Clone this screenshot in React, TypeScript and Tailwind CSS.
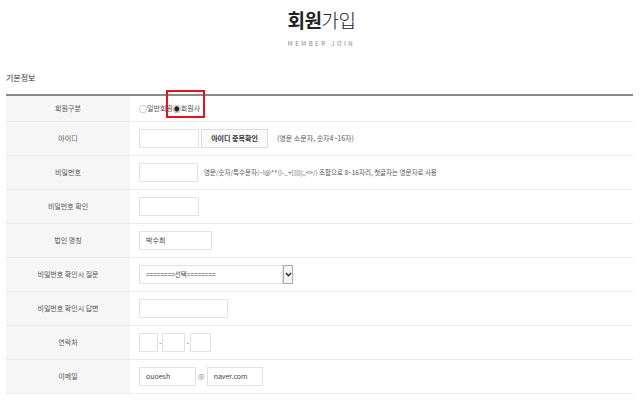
import React from "react";

const FONT = { fontFamily: '"Noto Sans CJK KR", "Noto Sans", sans-serif' };

function Row({ label, children, first }: { label: string; children: React.ReactNode; first?: boolean }) {
  return (
    <div className={`flex border-b border-[#ececec] ${first ? "h-[26px]" : "h-[34px]"}`}>
      <div className="w-[124px] shrink-0 bg-[#f6f6f6] flex items-center justify-center text-[7px] text-[#555]">
        {label}
      </div>
      <div className="flex-1 flex items-center pl-[9px] text-[7px] text-[#555]">{children}</div>
    </div>
  );
}

function Box({ w, value }: { w: string; value?: string }) {
  return (
    <div className={`${w} h-[19px] border border-[#e2e2e2] bg-white flex items-center px-[6px] text-[7px] text-[#444]`}>
      {value}
    </div>
  );
}

export default function App() {
  return (
    <div className="w-[643px] h-[403px] bg-white overflow-hidden antialiased" style={FONT}>
      <div className="flex flex-col items-center pt-[8px]">
        <h1 className="text-[19px] leading-[24px] text-[#222] tracking-[-0.5px]">
          <span className="font-bold">회원</span>
          <span className="font-light">가입</span>
        </h1>
        <p className="mt-[7px] text-[6px] tracking-[0.42em] text-[#888]">MEMBER JOIN</p>
      </div>

      <div className="px-[6px] pr-[10px]">
        <h2 className="mt-[24px] text-[8px] text-[#333]">기본정보</h2>

        <div className="mt-[10px] border-t-2 border-[#8a8a8a]">
          <Row label="회원구분" first>
            <div className="relative flex items-center">
              <span className="text-[8px] leading-none text-[#555]">○</span>
              <span>일반회원</span>
              <span className="text-[8px] leading-none text-[#222]">◉</span>
              <span>회원사</span>
              <div className="absolute left-[27px] top-[-13px] w-[39px] h-[28px] border-2 border-[#e3141c]" />
            </div>
          </Row>
          <Row label="아이디">
            <Box w="w-[60px]" />
            <div className="ml-[2px] w-[67px] h-[19px] border border-[#dcdcdc] bg-[#fafafa] flex items-center justify-center text-[7px] font-bold text-[#333]">
              아이디 중복확인
            </div>
            <span className="ml-[9px]">(영문 소문자, 숫자4~16자)</span>
          </Row>
          <Row label="비밀번호">
            <Box w="w-[59px]" />
            <span className="ml-[6px] text-[6.5px]">
              영문/숫자/특수문자(~!@*^()-_+[]{"{}"}|;,&lt;&gt;/) 조합으로 8~16자리, 첫글자는 영문자로 사용
            </span>
          </Row>
          <Row label="비밀번호 확인">
            <Box w="w-[60px]" />
          </Row>
          <Row label="법인 명칭">
            <Box w="w-[73px]" value="박수희" />
          </Row>
          <Row label="비밀번호 확인시 질문">
            <div className="w-[144px] h-[19px] border border-[#e2e2e2] flex items-center px-[6px] text-[6.5px] text-[#444]">
              ========선택========
            </div>
            <div className="w-[10px] h-[19px] border border-[#aaa] bg-[#f4f4f4] flex items-center justify-center">
              <svg width="7" height="5" viewBox="0 0 7 5">
                <path d="M1 1 L3.5 3.8 L6 1" stroke="#222" strokeWidth="1.3" fill="none" />
              </svg>
            </div>
          </Row>
          <Row label="비밀번호 확인시 답변">
            <Box w="w-[89px]" />
          </Row>
          <Row label="연락처">
            <Box w="w-[19px]" />
            <span className="mx-[1px]">-</span>
            <Box w="w-[23px]" />
            <span className="mx-[1px]">-</span>
            <Box w="w-[21px]" />
          </Row>
          <Row label="이메일">
            <Box w="w-[57px]" value="ouoesh" />
            <span className="mx-[2px] text-[#888]">@</span>
            <Box w="w-[56px]" value="naver.com" />
          </Row>
        </div>
      </div>
    </div>
  );
}
